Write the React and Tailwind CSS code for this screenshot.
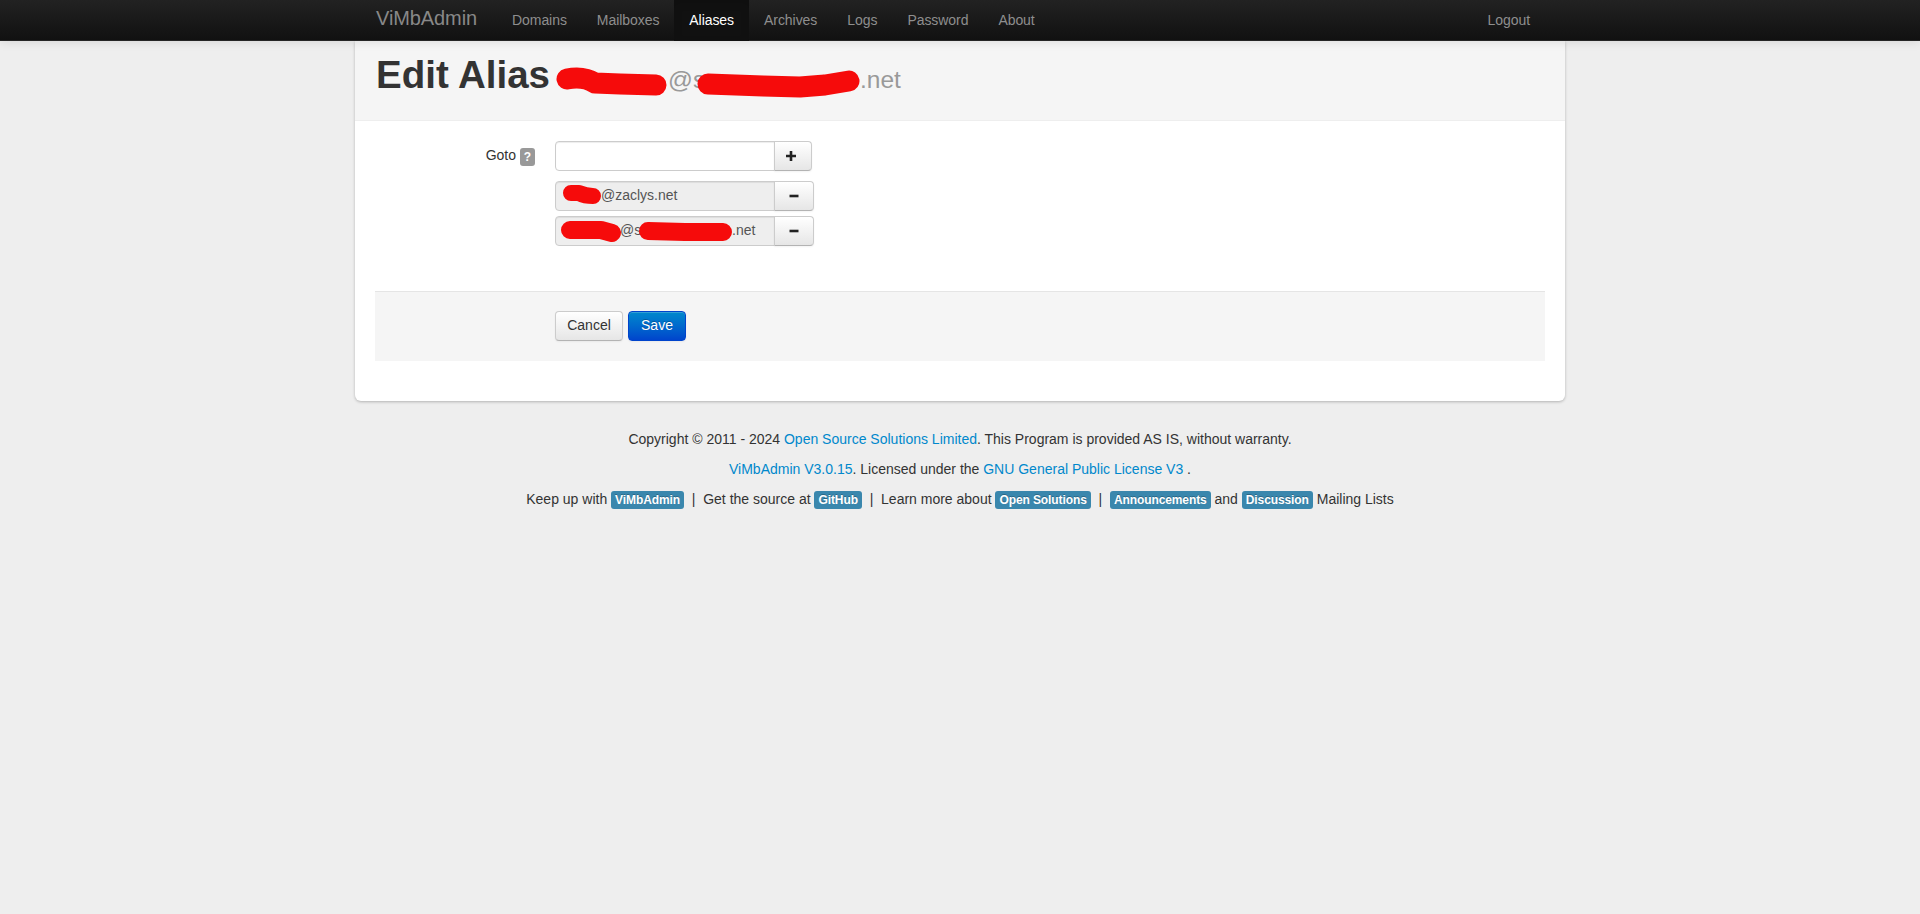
function Scribble({ d, width, height, sw, className }) {
  return (
    <svg width={width} height={height} className={className} fill="none" aria-hidden="true">
      {d.map((p, i) => (
        <path key={i} d={p} stroke="#f60b0b" strokeWidth={sw} strokeLinecap="round" strokeLinejoin="round" />
      ))}
    </svg>
  );
}

function Plus() {
  return (
    <svg width="12" height="12" viewBox="0 0 12 12" className="mr-[5px] block">
      <path d="M6 1v10M1 6h10" stroke="#222" strokeWidth="2.6" />
    </svg>
  );
}

function Minus() {
  return (
    <svg width="12" height="12" viewBox="0 0 12 12" className="block">
      <path d="M1.5 6h9" stroke="#222" strokeWidth="2.6" />
    </svg>
  );
}

function Badge({ children }) {
  return (
    <span className="inline-block rounded-[3px] bg-[#3a87ad] px-[4px] py-[2px] align-baseline text-[12px] font-bold tracking-[-0.1px] leading-[14px] whitespace-nowrap text-white [text-shadow:0_-1px_0_rgba(0,0,0,0.25)]">
      {children}
    </span>
  );
}

function A({ children }) {
  return <a className="text-[#0088cc]">{children}</a>;
}

function NavItem({ children, active }) {
  return (
    <a
      className={
        active
          ? "block bg-[#111111] px-[15px] pt-[10px] pb-[11px] leading-[20px] tracking-[-0.06px] text-white shadow-[inset_0_3px_8px_rgba(0,0,0,0.125)]"
          : "block px-[15px] pt-[10px] pb-[11px] leading-[20px] tracking-[-0.06px] text-[#8e8e8e]"
      }
    >
      {children}
    </a>
  );
}

function AddonBtn({ children, className }) {
  return (
    <button className={"flex items-center justify-center rounded-r-[4px] border border-[#cccccc] border-b-[#b3b3b3] bg-gradient-to-b from-white to-[#e6e6e6] shadow-[inset_0_1px_0_rgba(255,255,255,0.2),0_1px_2px_rgba(0,0,0,0.05)] " + className}>
      {children}
    </button>
  );
}

function DisabledRow({ className, children, scribble }) {
  return (
    <div className={"relative flex h-[30px] " + className}>
      <div className="flex w-[220px] items-center rounded-l-[4px] border border-[#cccccc] bg-[#eeeeee] pb-[2px] pl-[6px] text-[14px] text-[#555555] shadow-[inset_0_1px_1px_rgba(0,0,0,0.075)]">
        {children}
      </div>
      <AddonBtn className="ml-[-1px] w-[40px]"><Minus /></AddonBtn>
      {scribble}
    </div>
  );
}

export default function App() {
  return (
    <div className="relative min-h-[914px] bg-[#eeeeee] font-['Liberation_Sans',Arial,sans-serif] text-[14px] leading-[20px] text-[#333333]">
      <nav className="relative z-10 h-[41px] border-b border-[#252525] bg-gradient-to-b from-[#222222] to-[#111111] shadow-[0_1px_10px_rgba(0,0,0,0.1)]">
        <div className="mx-auto flex w-[1210px] items-start px-[20px]">
          <a className="ml-[1px] block w-[121px] pt-[8px] pb-[12px] text-[20px] leading-[20px] tracking-[-0.1px] text-[#888888]">ViMbAdmin</a>
          <div className="flex">
            <NavItem>Domains</NavItem>
            <NavItem>Mailboxes</NavItem>
            <NavItem active>Aliases</NavItem>
            <NavItem>Archives</NavItem>
            <NavItem>Logs</NavItem>
            <NavItem>Password</NavItem>
            <NavItem>About</NavItem>
          </div>
          <div className="ml-auto">
            <NavItem>Logout</NavItem>
          </div>
        </div>
      </nav>

      <main className="mx-auto h-[360px] w-[1210px] rounded-b-[6px] bg-white shadow-[0_1px_3px_rgba(0,0,0,0.25)]">
        <header className="relative h-[80px] border-b border-[#eeeeee] bg-[#f5f5f5] pl-[21px]">
          <h1 className="block pt-[14px] text-[38.5px] leading-[40px] font-bold whitespace-nowrap text-[#333333]">
            Edit Alias
            <small className="ml-[10px] text-[24.5px] font-normal text-[#999999]">
              <span className="inline-block w-[108px]"></span>
              <span className="inline-block w-[192px]">@s</span>
              .net
            </small>
          </h1>
          <Scribble
            className="absolute top-[20px] left-[200px]"
            width={320}
            height={45}
            sw={21}
            d={[
              "M12 18 C22 16 32 17 40 22 L65 23 L101 24",
              "M153 23 L208 25 L245 26 L270 24 L294 20",
            ]}
          />
        </header>

        <form className="px-[20px]">
          <div className="flex pt-[20px]">
            <div className="flex w-[160px] shrink-0 justify-end pt-[4px]">
              <label className="flex items-start leading-[20px]">
                Goto
                <span className="mt-[3px] ml-[4px] flex h-[18px] w-[15px] items-center justify-center rounded-[3px] bg-[#999999] text-[12px] font-bold text-white">?</span>
              </label>
            </div>
            <div className="ml-[20px]">
              <div className="flex h-[30px]">
                <input className="w-[220px] rounded-l-[4px] border border-[#cccccc] bg-white shadow-[inset_0_1px_1px_rgba(0,0,0,0.075)]" />
                <AddonBtn className="ml-[-1px] w-[38px]"><Plus /></AddonBtn>
              </div>
              <DisabledRow
                className="mt-[10px]"
                scribble={
                  <Scribble
                    className="absolute top-0 left-0"
                    width={60}
                    height={30}
                    sw={16}
                    d={["M16 12 L24 12 C28 14 32 15 38 15"]}
                  />
                }
              >
                <span className="inline-block w-[39px]"></span>@zaclys.net
              </DisabledRow>
              <DisabledRow
                className="mt-[5px]"
                scribble={
                  <Scribble
                    className="absolute top-0 left-0"
                    width={190}
                    height={30}
                    sw={18}
                    d={["M15 14 L30 14 L46 14 L57 17", "M93 15 L130 16 L168 16"]}
                  />
                }
              >
                <span className="inline-block w-[58px]"></span>
                <span className="inline-block w-[112px] whitespace-nowrap">@s</span>
                <span>.net</span>
              </DisabledRow>
            </div>
          </div>

          <div className="mt-[45px] flex h-[70px] gap-[5px] border-t border-[#e5e5e5] bg-[#f5f5f5] pt-[19px] pl-[180px]">
            <button type="button" className="h-[30px] w-[68px] rounded-[4px] border border-[#cccccc] border-b-[#b3b3b3] bg-gradient-to-b from-white to-[#e6e6e6] pb-[2px] text-[14px] text-[#333333] shadow-[inset_0_1px_0_rgba(255,255,255,0.2),0_1px_2px_rgba(0,0,0,0.05)]">
              Cancel
            </button>
            <button type="button" className="h-[30px] w-[58px] rounded-[4px] border border-[#0044cc] bg-gradient-to-b from-[#0088cc] to-[#0044cc] pb-[2px] text-[14px] text-white [text-shadow:0_-1px_0_rgba(0,0,0,0.25)] shadow-[inset_0_1px_0_rgba(255,255,255,0.2),0_1px_2px_rgba(0,0,0,0.05)]">
              Save
            </button>
          </div>
        </form>
      </main>

      <footer className="pt-[23px] text-center leading-[30px]">
        <p>
          Copyright © 2011 - 2024 <A>Open Source Solutions Limited</A>. This Program is provided AS IS, without warranty.
        </p>
        <p>
          <A>ViMbAdmin V3.0.15</A>. Licensed under the <A>GNU General Public License V3</A> .
        </p>
        <p>
          Keep up with <Badge>ViMbAdmin</Badge>&nbsp;&nbsp;|&nbsp;&nbsp;Get the source at <Badge>GitHub</Badge>&nbsp;&nbsp;|&nbsp;&nbsp;Learn more about <Badge>Open Solutions</Badge>&nbsp;&nbsp;|&nbsp;&nbsp;<Badge>Announcements</Badge> and <Badge>Discussion</Badge> Mailing Lists
        </p>
      </footer>
    </div>
  );
}
